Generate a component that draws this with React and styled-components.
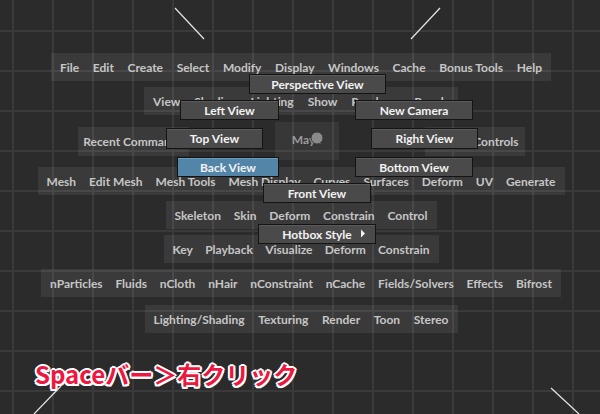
import React from 'react'
import styled, { createGlobalStyle } from 'styled-components'

const Global = createGlobalStyle`
  html, body {
    margin: 0;
    padding: 0;
    background: #2b2b2b;
  }
  #root {
    width: 600px;
    height: 414px;
  }
`

const rows = [
  { w: 500, items: ['File', 'Edit', 'Create', 'Select', 'Modify', 'Display', 'Windows', 'Cache', 'Bonus Tools', 'Help'] },
  { w: 314, items: ['View', 'Shading', 'Lighting', 'Show', 'Renderer', 'Panels'] },
]

const lowerRows = [
  { w: 527, items: ['Mesh', 'Edit Mesh', 'Mesh Tools', 'Mesh Display', 'Curves', 'Surfaces', 'Deform', 'UV', 'Generate'] },
  { w: 271, items: ['Skeleton', 'Skin', 'Deform', 'Constrain', 'Control'] },
  { w: 275, items: ['Key', 'Playback', 'Visualize', 'Deform', 'Constrain'] },
  { w: 520, items: ['nParticles', 'Fluids', 'nCloth', 'nHair', 'nConstraint', 'nCache', 'Fields/Solvers', 'Effects', 'Bifrost'] },
  { w: 313, items: ['Lighting/Shading', 'Texturing', 'Render', 'Toon', 'Stereo'], top: 2 },
]

const marking = [
  { label: 'Perspective View', x: 249, y: 74, w: 137, h: 20 },
  { label: 'Left View', x: 180, y: 100, w: 99, h: 20 },
  { label: 'New Camera', x: 355, y: 100, w: 118, h: 20 },
  { label: 'Top View', x: 166, y: 128, w: 97, h: 21 },
  { label: 'Right View', x: 371, y: 128, w: 107, h: 21 },
  { label: 'Back View', x: 177, y: 157, w: 102, h: 20, active: true },
  { label: 'Bottom View', x: 355, y: 157, w: 118, h: 20 },
  { label: 'Front View', x: 263, y: 183, w: 108, h: 20 },
  { label: 'Hotbox Style', x: 258, y: 224, w: 118, h: 20, sub: true },
]

function Row({ w, items, top }) {
  return (
    <Panel $w={w} $top={top}>
      {items.map((t, i) => <Item key={i}>{t}</Item>)}
    </Panel>
  )
}

function App() {
  return (
    <Screen>
      <Global />
      <Hotbox>
        {rows.map((r, i) => <Row key={i} {...r} />)}
        <CenterRow>
          <SidePanel $w={111}><Item>Recent Commands</Item></SidePanel>
          <MayaPanel><Item>Maya</Item></MayaPanel>
          <SidePanel $w={100}><Item>Hotbox Controls</Item></SidePanel>
        </CenterRow>
        {lowerRows.map((r, i) => <Row key={i} {...r} />)}
      </Hotbox>

      <Caption>Spaceバー＞右クリック</Caption>

      <Overlay width="600" height="414" viewBox="0 0 600 414">
        <g stroke="#e6e6e6" strokeWidth="1.2">
          <line x1="175" y1="8" x2="204" y2="39" />
          <line x1="411" y1="39" x2="440" y2="8" />
          <line x1="61" y1="386" x2="34" y2="414" />
          <line x1="551" y1="388" x2="579" y2="414" />
        </g>
        <circle cx="317" cy="138" r="6" fill="#8a8a8a" stroke="#3a3a3a" strokeWidth="1" />
      </Overlay>

      {marking.map((m) => (
        <MarkButton
          key={m.label}
          $active={m.active}
          style={{ left: m.x, top: m.y, width: m.w, height: m.h }}
        >
          {m.label}
          {m.sub && (
            <Arrow width="6" height="9" viewBox="0 0 6 9">
              <path d="M1 0.5 L5 4.5 L1 8.5 Z" fill="#f2f2f2" />
            </Arrow>
          )}
        </MarkButton>
      ))}
    </Screen>
  )
}

export default App

const Screen = styled.div`
  position: relative;
  width: 600px;
  height: 414px;
  overflow: hidden;
  display: flex;
  flex-direction: column;
  background-color: #2b2b2b;
  background-image:
    linear-gradient(to right, #3a3a3a 2px, transparent 2px),
    linear-gradient(to bottom, #3a3a3a 2px, transparent 2px);
  background-size: 40px 40px;
  background-position: 12px 30px;
  font-family: Lato, "Liberation Sans", sans-serif;
`

const Hotbox = styled.div`
  display: flex;
  flex-direction: column;
  align-items: center;
  gap: 6px;
  padding-top: 53px;
  padding-left: 2px;
`

const Panel = styled.div`
  box-sizing: border-box;
  width: ${(p) => p.$w}px;
  height: 28px;
  margin-top: ${(p) => p.$top || 0}px;
  padding: 0 9px;
  display: flex;
  align-items: center;
  justify-content: space-between;
  background: rgba(255, 255, 255, 0.075);
`

const Item = styled.span`
  font-size: 12px;
  font-weight: 700;
  color: #c6c6c6;
  white-space: nowrap;
`

const CenterRow = styled.div`
  display: flex;
  align-items: center;
  gap: 86px;
  height: 40px;
`

const SidePanel = styled.div`
  box-sizing: border-box;
  width: ${(p) => p.$w}px;
  height: 29px;
  padding: 0 8px;
  display: flex;
  align-items: center;
  justify-content: center;
  overflow: hidden;
  background: rgba(255, 255, 255, 0.075);
`

const MayaPanel = styled.div`
  width: 64px;
  height: 38px;
  display: flex;
  align-items: center;
  justify-content: center;
  background: rgba(255, 255, 255, 0.06);

  span {
    color: #9a9a9a;
    margin-top: -4px;
  }
`

const Caption = styled.div`
  margin-top: 26px;
  padding-left: 35px;
  font-family: "Noto Sans CJK JP", "Noto Sans", sans-serif;
  font-weight: 700;
  font-size: 24px;
  line-height: 30px;
  color: #ee173f;
  text-shadow:
    -2px 0 #fff, 2px 0 #fff, 0 -2px #fff, 0 2px #fff,
    -1.5px -1.5px #fff, 1.5px -1.5px #fff, -1.5px 1.5px #fff, 1.5px 1.5px #fff;
`

const Overlay = styled.svg`
  position: absolute;
  left: 0;
  top: 0;
  pointer-events: none;
`

const MarkButton = styled.div`
  position: absolute;
  box-sizing: border-box;
  display: flex;
  align-items: center;
  justify-content: center;
  border: 1px solid #141414;
  background: ${(p) => (p.$active ? '#5285a7' : '#4a4a4a')};
  box-shadow: inset 0 1px 0 ${(p) => (p.$active ? '#6c9cbb' : '#5a5a5a')};
  color: #f2f2f2;
  font-size: 12px;
  font-weight: 700;
  white-space: nowrap;
`

const Arrow = styled.svg`
  position: absolute;
  right: 9px;
  top: 4px;
`
